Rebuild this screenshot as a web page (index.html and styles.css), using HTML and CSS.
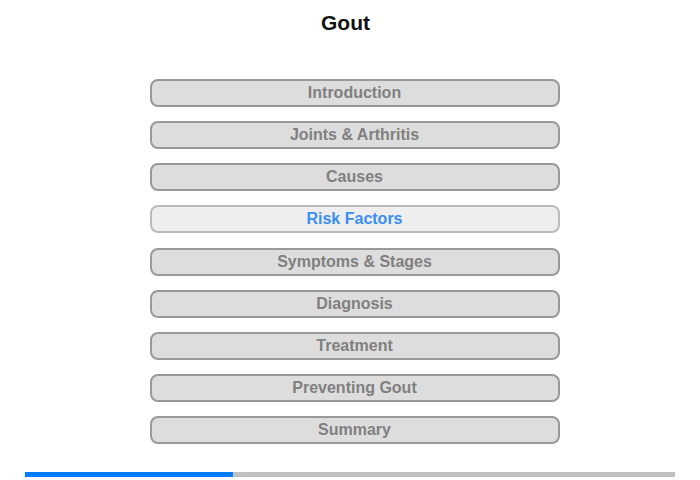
FILE: index.html
```html
<!DOCTYPE html>
<html>
<head>
<meta charset="utf-8">
<link rel="stylesheet" href="styles.css">
</head>
<body>
<div class="page">
  <h1 class="title">Gout</h1>
  <nav class="menu">
    <div class="item">Introduction</div>
    <div class="item">Joints &amp; Arthritis</div>
    <div class="item">Causes</div>
    <div class="item active">Risk Factors</div>
    <div class="item">Symptoms &amp; Stages</div>
    <div class="item">Diagnosis</div>
    <div class="item">Treatment</div>
    <div class="item">Preventing Gout</div>
    <div class="item">Summary</div>
  </nav>
  <div class="progress"><div class="progress-fill" style="width:32%"></div></div>
</div>
</body>
</html>
```
FILE: styles.css
```css
html, body {
  margin: 0;
  padding: 0;
  background: #fff;
}
.page {
  width: 700px;
  height: 480px;
  display: flex;
  flex-direction: column;
  align-items: center;
  font-family: "Liberation Sans", Arial, sans-serif;
}
.title {
  margin: 11px 9px 0 0;
  font-size: 21px;
  line-height: 24px;
  font-weight: bold;
  color: #111;
}
.menu {
  margin: 44px 0 0 9px;
  display: flex;
  flex-direction: column;
  gap: 14.125px;
}
.item {
  box-sizing: border-box;
  width: 410px;
  height: 28px;
  border: 2px solid #999;
  border-radius: 8px;
  background: #ddd;
  color: #808080;
  font-size: 16px;
  font-weight: bold;
  display: flex;
  align-items: center;
  justify-content: center;
}
.item.active {
  background: #eee;
  border-color: #bbb;
  color: #3a8ef2;
}
.progress {
  margin-top: 28px;
  width: 650px;
  height: 5px;
  background: #c0c0c0;
  display: flex;
}
.progress-fill {
  height: 100%;
  background: #007bff;
}
```
